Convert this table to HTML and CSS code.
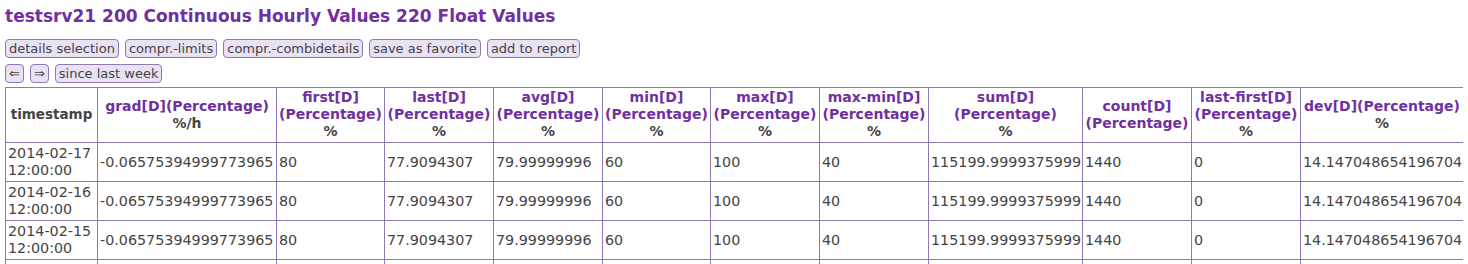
FILE: index.html
```html
<!DOCTYPE html>
<html>
<head>
<meta charset="utf-8">
<link rel="stylesheet" href="styles.css">
</head>
<body>
<h1 class="title">testsrv21 200 Continuous Hourly Values 220 Float Values</h1>
<div class="toolbar">
  <button class="btn">details selection</button>
  <button class="btn">compr.-limits</button>
  <button class="btn">compr.-combidetails</button>
  <button class="btn">save as favorite</button>
  <button class="btn">add to report</button>
</div>
<div class="toolbar">
  <button class="btn">&lArr;</button>
  <button class="btn">&rArr;</button>
  <button class="btn">since last week</button>
</div>
<table class="data">
  <colgroup>
    <col class="c-ts"><col class="c-grad"><col class="c-108"><col class="c-109"><col class="c-109"><col class="c-108"><col class="c-109"><col class="c-109"><col class="c-sum"><col class="c-109"><col class="c-109"><col class="c-dev">
  </colgroup>
  <thead>
    <tr>
      <th class="plain">timestamp</th>
      <th><a>grad[D](Percentage)</a><br><span class="unit">%/h</span></th>
      <th><a>first[D]<br>(Percentage)</a><br><span class="unit">%</span></th>
      <th><a>last[D]<br>(Percentage)</a><br><span class="unit">%</span></th>
      <th><a>avg[D]<br>(Percentage)</a><br><span class="unit">%</span></th>
      <th><a>min[D]<br>(Percentage)</a><br><span class="unit">%</span></th>
      <th><a>max[D]<br>(Percentage)</a><br><span class="unit">%</span></th>
      <th><a>max-min[D]<br>(Percentage)</a><br><span class="unit">%</span></th>
      <th><a>sum[D]<br>(Percentage)</a><br><span class="unit">%</span></th>
      <th><a>count[D]<br>(Percentage)</a></th>
      <th><a>last-first[D]<br>(Percentage)</a><br><span class="unit">%</span></th>
      <th><a>dev[D](Percentage)</a><br><span class="unit">%</span></th>
    </tr>
  </thead>
  <tbody>
    <tr><td>2014-02-17<br>12:00:00</td><td>-0.06575394999773965</td><td>80</td><td>77.9094307</td><td>79.99999996</td><td>60</td><td>100</td><td>40</td><td>115199.9999375999</td><td>1440</td><td>0</td><td>14.147048654196704</td></tr>
    <tr><td>2014-02-16<br>12:00:00</td><td>-0.06575394999773965</td><td>80</td><td>77.9094307</td><td>79.99999996</td><td>60</td><td>100</td><td>40</td><td>115199.9999375999</td><td>1440</td><td>0</td><td>14.147048654196704</td></tr>
    <tr><td>2014-02-15<br>12:00:00</td><td>-0.06575394999773965</td><td>80</td><td>77.9094307</td><td>79.99999996</td><td>60</td><td>100</td><td>40</td><td>115199.9999375999</td><td>1440</td><td>0</td><td>14.147048654196704</td></tr>
    <tr><td>2014-02-14<br>12:00:00</td><td>-0.06575394999773965</td><td>80</td><td>77.9094307</td><td>79.99999996</td><td>60</td><td>100</td><td>40</td><td>115199.9999375999</td><td>1440</td><td>0</td><td>14.147048654196704</td></tr>
  </tbody>
</table>
</body>
</html>
```
FILE: styles.css
```css
body {
  margin: 5px;
  font-family: "DejaVu Sans", Verdana, sans-serif;
  font-size: 14.3px;
  color: #444;
  background: #fff;
}
.title {
  margin: 0 0 12px;
  font-size: 17px;
  font-weight: bold;
  color: #7030a0;
  line-height: 22px;
}
.toolbar {
  display: flex;
  gap: 6px;
  margin-bottom: 6px;
}
.btn {
  font-family: "DejaVu Sans", Verdana, sans-serif;
  font-size: 13px;
  color: #444;
  background: #e8e2f4;
  border: 1px solid #9078b0;
  border-radius: 4px;
  padding: 0 3px;
  height: 19px;
  line-height: 17px;
}
.data {
  border-collapse: collapse;
  table-layout: fixed;
  width: 1458px;
  margin-top: -2px;
}
.data th, .data td {
  border: 1px solid #9078b0;
  padding: 1px 2px;
  line-height: 17px;
}
.data th {
  text-align: center;
  font-weight: bold;
  font-size: 14px;
  color: #444;
  padding-bottom: 2px;
}
.data th.plain {
  font-size: 13.5px;
}
.data th a {
  color: #7030a0;
}
.data td {
  text-align: left;
  white-space: nowrap;
  height: 36px;
}
.c-ts { width: 92px; }
.c-grad { width: 179px; }
.c-108 { width: 108px; }
.c-109 { width: 109px; }
.c-sum { width: 154px; }
.c-dev { width: 163px; }
```
